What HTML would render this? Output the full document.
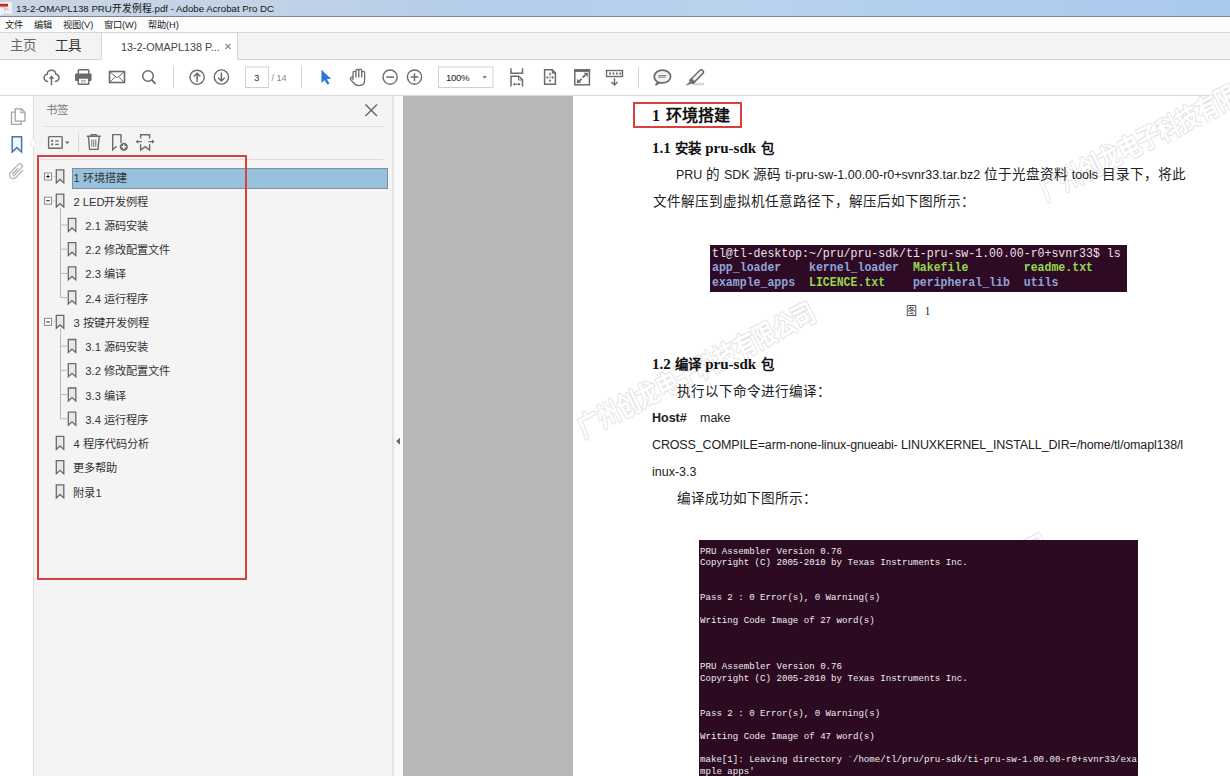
<!DOCTYPE html>
<html lang="zh-CN">
<head>
<meta charset="utf-8">
<style>
*{margin:0;padding:0;box-sizing:border-box}
html,body{width:1230px;height:776px;overflow:hidden;background:#fff}
body{position:relative;font-family:"Liberation Sans",sans-serif;color:#333}
.a{position:absolute}
.t{position:absolute;white-space:nowrap;line-height:1}
svg{position:absolute;overflow:visible}
.h2l{font-family:"Liberation Serif",serif;font-size:15px;margin-right:1px}
.s{font-family:"Liberation Sans",sans-serif;font-size:12.5px}
</style>
</head>
<body>
<!-- title bar -->
<div class="a" style="left:0;top:0;width:1230px;height:16px;background:linear-gradient(90deg,#c9d5e2 0%,#c3d3e6 20%,#b4cdea 40%,#b9d2ee 60%,#a9c9ee 100%)"></div>
<div class="a" style="left:0;top:16px;width:1230px;height:1px;background:#7a8696"></div>
<!-- menu bar -->
<div class="a" style="left:0;top:17px;width:1230px;height:15px;background:#fcfcfc"></div>
<div class="a" style="left:0;top:32px;width:1230px;height:1px;background:#d8d8d8"></div>
<!-- tab bar -->
<div class="a" style="left:0;top:33px;width:1230px;height:26px;background:#f3f3f3"></div>
<div class="a" style="left:0;top:59px;width:1230px;height:1px;background:#d6d6d6"></div>
<div class="a" style="left:101px;top:32px;width:137px;height:28px;background:#fff;border-left:1px solid #d6d6d6;border-right:1px solid #d6d6d6;border-top:1px solid #d6d6d6"></div>
<!-- toolbar -->
<div class="a" style="left:0;top:60px;width:1230px;height:35px;background:#fff"></div>
<div class="a" style="left:0;top:95px;width:1230px;height:1px;background:#d9d9d9"></div>
<!-- nav rail -->
<div class="a" style="left:0;top:96px;width:34px;height:680px;background:#fff"></div>
<div class="a" style="left:33px;top:96px;width:1px;height:680px;background:#dcdcdc"></div>
<!-- panel -->
<div class="a" style="left:34px;top:96px;width:358px;height:680px;background:#f4f4f4"></div>
<div class="a" style="left:392px;top:96px;width:2px;height:680px;background:#e2e2e2"></div>
<div class="a" style="left:394px;top:96px;width:9px;height:680px;background:#f9f9f9"></div>
<!-- doc grey -->
<div class="a" style="left:403px;top:96px;width:170px;height:680px;background:#b8b8b8"></div>
<!-- page -->
<div class="a" style="left:573px;top:96px;width:657px;height:680px;background:#fff"></div>

<!-- title text -->
<svg style="left:0;top:0" width="14" height="17">
<rect x="0" y="2" width="12" height="13" fill="#eef0f4"/>
<rect x="0" y="3.8" width="8" height="2.8" fill="#c8281e"/>
<path d="M3 7 C5 8 6 9 5 11.5 M6.5 7.5 L8.5 10.5" stroke="#e6aaaa" stroke-width="1.2" fill="none"/>
<path d="M2.5 14.3 H11" stroke="#b9c3d0" stroke-width="0.8"/>
</svg>
<div class="t" style="left:16px;top:4px;font-size:9.7px;color:#151515">13-2-OMAPL138 PRU开发例程.pdf - Adobe Acrobat Pro DC</div>
<!-- menu -->
<div class="t" style="left:5px;top:20.8px;font-size:9.2px;color:#1a1a1a">文件</div>
<div class="t" style="left:34px;top:20.8px;font-size:9.2px;color:#1a1a1a">编辑</div>
<div class="t" style="left:63px;top:20.8px;font-size:9.2px;color:#1a1a1a">视图(V)</div>
<div class="t" style="left:104px;top:20.8px;font-size:9.2px;color:#1a1a1a">窗口(W)</div>
<div class="t" style="left:148px;top:20.8px;font-size:9.2px;color:#1a1a1a">帮助(H)</div>
<!-- tabs -->
<div class="t" style="left:10px;top:39px;font-size:13.5px;color:#666">主页</div>
<div class="t" style="left:55px;top:39px;font-size:13.5px;color:#333">工具</div>
<div class="t" style="left:121px;top:41.6px;font-size:10.8px;color:#444">13-2-OMAPL138 P...</div>
<svg style="left:0;top:0" width="1230" height="96">
<path d="M225.5 44 L230.5 49 M230.5 44 L225.5 49" stroke="#8a8a8a" stroke-width="1.2"/>
</svg>
<!-- toolbar icons -->
<svg style="left:0;top:0" width="1230" height="96" fill="none" stroke="#6b6b6b" stroke-width="1.5">
<!-- cloud upload -->
<path d="M48.2 81.35 A3.6 3.6 0 1 1 47.12 74.23 A4.4 4.4 0 0 1 55.88 74.2 A3.6 3.6 0 1 1 54.8 81.35" stroke-width="1.5"/>
<path d="M51.5 85.3 V77.8" stroke-width="1.5"/><path d="M51.5 75.2 L48.7 78.7 H54.3 Z" fill="#6b6b6b" stroke="none"/>
<!-- printer -->
<rect x="78.3" y="69.8" width="10.4" height="5" rx="0.8"/>
<rect x="75" y="73.6" width="16.6" height="7.3" rx="0.8" fill="#6b6b6b" stroke="none"/>
<rect x="78.3" y="78" width="10.4" height="6.3" rx="0.6" fill="#fff"/>
<path d="M81 80.4 H86 M81 82 H86" stroke="#9a9a9a" stroke-width="0.9"/>
<!-- envelope -->
<rect x="109.5" y="71.5" width="15" height="11" stroke-width="1.6"/>
<path d="M110 72 L117 77.8 L124 72 M110 82 L115.2 77 M124 82 L118.8 77" stroke-width="1"/>
<!-- search -->
<circle cx="148" cy="76" r="5.3" stroke-width="1.5"/>
<path d="M151.8 79.8 L155.5 83.8" stroke-width="1.8"/>
<!-- separators -->
<path d="M173.5 66.5 V88 M301.5 66.5 V88 M638.5 67 V88" stroke="#d4d4d4" stroke-width="1"/>
<!-- up/down -->
<circle cx="197.1" cy="77.3" r="7.1" stroke-width="1.4"/>
<path d="M197.1 73.2 V81.8 M193.8 76.5 L197.1 73.2 L200.4 76.5" stroke-width="1.5"/>
<circle cx="221.4" cy="77" r="7.1" stroke-width="1.4"/>
<path d="M221.4 72.5 V81 M218.1 77.7 L221.4 81 L224.7 77.7" stroke-width="1.5"/>
<!-- page box -->
<rect x="245.5" y="67" width="23" height="20.5" stroke="#d0d0d0" stroke-width="1"/>
<!-- cursor -->
<path d="M321.4 69.8 L321.4 83 L324.5 80.2 L327.4 84.6 L329.6 83.4 L326.8 79.2 L331 78.8 Z" fill="#2b78d4" stroke="none"/>
<!-- hand -->
<path d="M353 80 V72.8 A1.45 1.45 0 0 1 355.9 72.8 V77 V70.9 A1.45 1.45 0 0 1 358.8 70.9 V77 V70.5 A1.45 1.45 0 0 1 361.7 70.5 V77 V72.8 A1.45 1.45 0 0 1 364.6 72.8 V80.3 C364.6 83.9 362.5 85.6 359.2 85.6 C356.3 85.6 354.8 84.6 353.2 82.6 L350.7 79.5 A1.3 1.3 0 0 1 352.7 77.8 L353.2 78.5" stroke-width="1.3" stroke-linejoin="round"/>
<!-- minus / plus -->
<circle cx="390.1" cy="77.1" r="7.1" stroke-width="1.4"/>
<path d="M386.2 77.1 H394" stroke-width="1.5"/>
<circle cx="414.5" cy="77.1" r="7.1" stroke-width="1.4"/>
<path d="M410.6 77.1 H418.4 M414.5 73.2 V81" stroke-width="1.5"/>
<!-- zoom box -->
<rect x="438.5" y="67" width="54.5" height="20.5" stroke="#d0d0d0" stroke-width="1"/>
<path d="M482.4 76.2 H487 L484.7 78.6 Z" fill="#666" stroke="none"/>
<!-- fit width -->
<path d="M511 68.2 V73.2 H522.5 V68.2" stroke-width="1.5"/>
<path d="M511 86.5 V76.2 H518.8 L522.5 79.8 V86.5" stroke-width="1.5"/>
<path d="M518.5 76.2 V80 H522.5" stroke-width="1"/>
<path d="M514 84.2 H519.5" stroke-width="1.1"/><path d="M512.8 84.2 L515 82.6 V85.8 Z M520.7 84.2 L518.5 82.6 V85.8 Z" fill="#6b6b6b" stroke="none"/>
<!-- fit page -->
<path d="M544.6 69.8 H552.2 L555.4 73 V84.3 H544.6 Z" stroke-width="1.5"/>
<path d="M552.2 69.8 V73.2 H555.4 Z" fill="#6b6b6b" stroke-width="0.8"/>
<path d="M550 74 V80.8 M547 77.4 H553" stroke="#9a9a9a" stroke-width="0.7"/><path d="M550 72.6 L548.5 74.6 H551.5 Z M550 82.2 L548.5 80.2 H551.5 Z M545.8 77.4 L547.8 75.9 V78.9 Z M554.2 77.4 L552.2 75.9 V78.9 Z" fill="#6b6b6b" stroke="none"/>
<!-- fullscreen -->
<rect x="574.8" y="69.8" width="14.6" height="15" stroke-width="1.5"/>
<rect x="574.1" y="69.1" width="16" height="2.8" fill="#6b6b6b" stroke="none"/>
<path d="M582.6 77.6 L585.4 74.8 M581.6 78.8 L579 81.4" stroke-width="1.8"/><path d="M587.8 72.8 H583.6 L587.8 77 Z M576.9 82.9 H581.1 L576.9 78.7 Z" fill="#6b6b6b" stroke="none"/>
<!-- scroll mode -->
<rect x="606.5" y="70.5" width="16" height="6" stroke-width="1.4"/>
<path d="M609.2 73.5 H611 M612.6 73.5 H614.4 M616 73.5 H617.8 M619.4 73.5 H621.2" stroke-width="2"/>
<path d="M614.5 78.3 V85 M611.4 82 L614.5 85 L617.6 82" stroke-width="1.4"/>
<!-- comment -->
<path d="M657.8 82 C655.3 80.8 654.3 78.8 654.3 76.6 C654.3 72.8 658 70.2 662.5 70.2 C667 70.2 670.6 72.8 670.6 76.6 C670.6 80.3 667 82.9 662.5 82.9 C661.5 82.9 660.6 82.8 659.7 82.6 L656 84.8 Z" fill="#f2f2f2" stroke-width="1.7" stroke-linejoin="round"/>
<path d="M658.3 75.6 H666.4 M658.3 77.2 H665.6" stroke="#8a8a8a" stroke-width="1.1"/>
<!-- pen -->
<path d="M693.5 84 H704" stroke="#d6d6d6" stroke-width="2.6"/>
<path d="M689.9 80.3 L699.7 70.5 A2.15 2.15 0 0 1 702.8 73.6 L693 83.4 Z" fill="#f4f4f4" stroke-width="1.5" stroke-linejoin="round"/>
<path d="M689.9 80.3 L691.4 78.8 L694.5 81.9 L693 83.4 Z" fill="#6b6b6b" stroke-width="1.2"/>
<path d="M690.2 81.4 L686.6 85 L691.9 83.1 Z" fill="#6b6b6b" stroke-width="0.8"/>
</svg>
<div class="t" style="left:254px;top:73px;font-size:9.6px;color:#333">3</div>
<div class="t" style="left:271.5px;top:74px;font-size:9px;color:#888">/ 14</div>
<div class="t" style="left:446px;top:72.8px;font-size:9.6px;color:#222;letter-spacing:-0.3px">100%</div>
<!-- nav rail icons -->
<svg style="left:0;top:0" width="40" height="200" fill="none" stroke="#a2a2a2" stroke-width="1.3">
<path d="M15.2 108.8 H21.3 L25 112.5 V121.2 H15.2 Z" stroke-linejoin="round"/>
<path d="M21 108.8 V112.7 H25" stroke-width="1.1"/>
<path d="M15.2 112.2 H11.5 V124.4 H21.2 V121.4" stroke-linejoin="round"/>
<path d="M12.2 136.7 H21.6 V152 L16.9 147.6 L12.2 152 Z" fill="#f3f6fa" stroke="#3f78b4" stroke-width="1.5" stroke-linejoin="miter"/>
<path d="M34 138.5 L29.5 143.3 L34 148" fill="#fff" stroke="#dcdcdc" stroke-width="1"/>
<path d="M13.5 176 L21.6 167.6 A2.3 2.3 0 0 0 18.3 164.4 L10.6 172.5 A3.6 3.6 0 0 0 15.8 177.5 L22.7 170.4 M17.6 168.8 L12.6 174" stroke="#b0b0b0" stroke-width="1.25" stroke-linecap="round"/>
</svg>
<!-- panel header -->
<div class="t" style="left:46px;top:105px;font-size:11.5px;color:#7a7a7a">书签</div>
<svg style="left:0;top:0" width="400" height="170" fill="none" stroke="#6b6b6b" stroke-width="1.4">
<path d="M365.5 104.5 L377 116 M377 104.5 L365.5 116" stroke-width="1.5"/>
<path d="M45 126.5 H383" stroke="#dcdcdc" stroke-width="1.2"/>
<path d="M40 159.5 H383" stroke="#dedede" stroke-width="1"/>
<!-- options -->
<rect x="48.6" y="136.6" width="13.6" height="11.6" rx="0.8" stroke-width="1.4"/>
<circle cx="52.2" cy="140.9" r="1.15" fill="#6b6b6b" stroke="none"/><circle cx="52.2" cy="144.4" r="1.15" fill="#6b6b6b" stroke="none"/><path d="M55.2 140.9 H58.8 M55.2 144.4 H58.8" stroke-width="1.3"/>
<path d="M65 141.6 H69.5 L67.25 144.2 Z" fill="#6b6b6b" stroke="none"/>
<path d="M78.5 132.5 V152.5" stroke="#d8d8d8" stroke-width="1"/>
<!-- trash -->
<path d="M86.8 136.2 H100.8 M91.2 136.2 V134.6 H96.4 V136.2 M88.4 136.5 L89.6 149.4 H98 L99.2 136.5" stroke-width="1.4" stroke-linejoin="round"/>
<path d="M91.8 139.5 V146.8 M93.8 139.5 V146.8 M95.8 139.5 V146.8" stroke-width="0.9"/>
<!-- bookmark add -->
<path d="M121 143 V134.6 H112.7 V149.8 L116.6 146.3" stroke-width="1.4" stroke-linejoin="miter"/>
<circle cx="123.8" cy="146.8" r="4.4" fill="#6b6b6b" stroke="#f4f4f4" stroke-width="0.8"/>
<path d="M121.6 146.8 H126 M123.8 144.6 V149" stroke="#fff" stroke-width="1.4"/>
<!-- expand bookmark -->
<path d="M140.6 138.6 V134.7 H149.6 V138.6 M140.6 144.2 V150 L145.1 146.6 L149.6 150 V144.2" stroke-width="1.4" stroke-linejoin="miter"/>
<path d="M137.5 141.7 H141.8 M148.4 141.7 H152.7" stroke-width="1.3"/><path d="M135.6 141.7 L138.2 139.6 V143.8 Z M154.6 141.7 L152 139.6 V143.8 Z" fill="#6b6b6b" stroke="none"/>
</svg>
<!-- selection -->
<div class="a" style="left:72px;top:168px;width:316px;height:21px;background:#98c1dd;border:1px solid #7b919f"></div>
<!-- red box -->
<div class="a" style="left:37px;top:155px;width:210px;height:425px;border:2px solid #d6403d"></div>
<svg style="left:0;top:0" width="400" height="776" fill="none">
<path d="M56.3 169.9 H63.8 V182.9 L60.0 179.5 L56.3 182.9 Z" fill="#e8e8e8" stroke="#6a6a6a" stroke-width="1.3" stroke-linejoin="miter"/>
<rect x="44.5" y="173.0" width="7" height="7" fill="#fff" stroke="#8a8a8a" stroke-width="1"/>
<path d="M46.2 176.5 H49.8" stroke="#222" stroke-width="1"/>
<path d="M48 174.7 V178.3" stroke="#222" stroke-width="1"/>
<path d="M51.5 176.5 H55" stroke="#bbb" stroke-width="1" stroke-dasharray="1 1"/>
<path d="M56.3 194.1 H63.8 V207.1 L60.0 203.7 L56.3 207.1 Z" fill="#e8e8e8" stroke="#6a6a6a" stroke-width="1.3" stroke-linejoin="miter"/>
<rect x="44.5" y="197.2" width="7" height="7" fill="#fff" stroke="#8a8a8a" stroke-width="1"/>
<path d="M46.2 200.7 H49.8" stroke="#222" stroke-width="1"/>
<path d="M51.5 200.7 H55" stroke="#bbb" stroke-width="1" stroke-dasharray="1 1"/>
<path d="M68.3 218.4 H75.8 V231.4 L72.0 228.0 L68.3 231.4 Z" fill="#e8e8e8" stroke="#6a6a6a" stroke-width="1.3" stroke-linejoin="miter"/>
<path d="M60.5 225.0 H67" stroke="#b8b8b8" stroke-width="1"/>
<path d="M68.3 242.6 H75.8 V255.6 L72.0 252.2 L68.3 255.6 Z" fill="#e8e8e8" stroke="#6a6a6a" stroke-width="1.3" stroke-linejoin="miter"/>
<path d="M60.5 249.2 H67" stroke="#b8b8b8" stroke-width="1"/>
<path d="M68.3 266.8 H75.8 V279.8 L72.0 276.4 L68.3 279.8 Z" fill="#e8e8e8" stroke="#6a6a6a" stroke-width="1.3" stroke-linejoin="miter"/>
<path d="M60.5 273.4 H67" stroke="#b8b8b8" stroke-width="1"/>
<path d="M68.3 291.0 H75.8 V304.0 L72.0 300.6 L68.3 304.0 Z" fill="#e8e8e8" stroke="#6a6a6a" stroke-width="1.3" stroke-linejoin="miter"/>
<path d="M60.5 297.6 H67" stroke="#b8b8b8" stroke-width="1"/>
<path d="M56.3 315.3 H63.8 V328.3 L60.0 324.9 L56.3 328.3 Z" fill="#e8e8e8" stroke="#6a6a6a" stroke-width="1.3" stroke-linejoin="miter"/>
<rect x="44.5" y="318.4" width="7" height="7" fill="#fff" stroke="#8a8a8a" stroke-width="1"/>
<path d="M46.2 321.9 H49.8" stroke="#222" stroke-width="1"/>
<path d="M51.5 321.9 H55" stroke="#bbb" stroke-width="1" stroke-dasharray="1 1"/>
<path d="M68.3 339.5 H75.8 V352.5 L72.0 349.1 L68.3 352.5 Z" fill="#e8e8e8" stroke="#6a6a6a" stroke-width="1.3" stroke-linejoin="miter"/>
<path d="M60.5 346.1 H67" stroke="#b8b8b8" stroke-width="1"/>
<path d="M68.3 363.7 H75.8 V376.7 L72.0 373.3 L68.3 376.7 Z" fill="#e8e8e8" stroke="#6a6a6a" stroke-width="1.3" stroke-linejoin="miter"/>
<path d="M60.5 370.3 H67" stroke="#b8b8b8" stroke-width="1"/>
<path d="M68.3 388.0 H75.8 V401.0 L72.0 397.6 L68.3 401.0 Z" fill="#e8e8e8" stroke="#6a6a6a" stroke-width="1.3" stroke-linejoin="miter"/>
<path d="M60.5 394.6 H67" stroke="#b8b8b8" stroke-width="1"/>
<path d="M68.3 412.2 H75.8 V425.2 L72.0 421.8 L68.3 425.2 Z" fill="#e8e8e8" stroke="#6a6a6a" stroke-width="1.3" stroke-linejoin="miter"/>
<path d="M60.5 418.8 H67" stroke="#b8b8b8" stroke-width="1"/>
<path d="M56.3 436.4 H63.8 V449.4 L60.0 446.0 L56.3 449.4 Z" fill="#e8e8e8" stroke="#6a6a6a" stroke-width="1.3" stroke-linejoin="miter"/>
<path d="M56.3 460.7 H63.8 V473.7 L60.0 470.3 L56.3 473.7 Z" fill="#e8e8e8" stroke="#6a6a6a" stroke-width="1.3" stroke-linejoin="miter"/>
<path d="M56.3 484.9 H63.8 V497.9 L60.0 494.5 L56.3 497.9 Z" fill="#e8e8e8" stroke="#6a6a6a" stroke-width="1.3" stroke-linejoin="miter"/>
<path d="M60.5 207.7 V297.6 M60.5 328.9 V418.8" stroke="#b8b8b8" stroke-width="1"/>
</svg>
<div class="t" style="left:73.4px;top:172.5px;font-size:11.2px;color:#333">1 环境搭建</div>
<div class="t" style="left:73.4px;top:196.7px;font-size:11.2px;color:#333">2 LED开发例程</div>
<div class="t" style="left:85.3px;top:221.0px;font-size:11.2px;color:#333">2.1 源码安装</div>
<div class="t" style="left:85.3px;top:245.2px;font-size:11.2px;color:#333">2.2 修改配置文件</div>
<div class="t" style="left:85.3px;top:269.4px;font-size:11.2px;color:#333">2.3 编译</div>
<div class="t" style="left:85.3px;top:293.6px;font-size:11.2px;color:#333">2.4 运行程序</div>
<div class="t" style="left:73.4px;top:317.9px;font-size:11.2px;color:#333">3 按键开发例程</div>
<div class="t" style="left:85.3px;top:342.1px;font-size:11.2px;color:#333">3.1 源码安装</div>
<div class="t" style="left:85.3px;top:366.3px;font-size:11.2px;color:#333">3.2 修改配置文件</div>
<div class="t" style="left:85.3px;top:390.6px;font-size:11.2px;color:#333">3.3 编译</div>
<div class="t" style="left:85.3px;top:414.8px;font-size:11.2px;color:#333">3.4 运行程序</div>
<div class="t" style="left:73.4px;top:439.0px;font-size:11.2px;color:#333">4 程序代码分析</div>
<div class="t" style="left:73.4px;top:463.3px;font-size:11.2px;color:#333">更多帮助</div>
<div class="t" style="left:73.4px;top:487.5px;font-size:11.2px;color:#333">附录1</div>
<!-- splitter arrow -->
<svg style="left:0;top:0" width="410" height="776"><path d="M400 437.8 V444.8 L396 441.3 Z" fill="#6a6a6a"/></svg>
<!-- watermark -->
<svg style="left:0;top:0" width="1230" height="776">
<g font-family="Liberation Sans, sans-serif" font-size="27" font-weight="bold" fill="#fff" stroke="#e3e3e3" stroke-width="2.2" paint-order="stroke" stroke-linejoin="round">
<text x="584" y="438" transform="rotate(-27 584 438)" textLength="262" lengthAdjust="spacingAndGlyphs">广州创龙电子科技有限公司</text>
<text x="1046" y="201" transform="rotate(-27 1046 201)" textLength="262" lengthAdjust="spacingAndGlyphs">广州创龙电子科技有限公司</text>
<text x="817" y="670" transform="rotate(-27 817 670)" textLength="262" lengthAdjust="spacingAndGlyphs">广州创龙电子科技有限公司</text>
</g>
</svg>
<!-- document -->
<div class="a" style="left:633px;top:101.5px;width:109px;height:26px;border:2px solid #d6403d"></div>
<div class="t" style="left:652px;top:108.2px;font-size:16px;font-weight:bold;color:#111"><span style="font-family:'Liberation Serif',serif;margin-right:1.2px">1</span> 环境搭建</div>
<div class="t" style="left:652px;top:140.5px;font-size:13.4px;font-weight:bold;color:#111"><span class="h2l">1.1</span> 安装 <span class="h2l">pru-sdk</span> 包</div>
<div class="t" style="left:676px;top:168.3px;font-size:13.6px;color:#222"><span class="s">PRU</span> 的 <span class="s">SDK</span> 源码 <span class="s">ti-pru-sw-1.00.00-r0+svnr33.tar.bz2</span> 位于光盘资料 <span class="s">tools</span> 目录下，将此</div>
<div class="t" style="left:652.5px;top:195.3px;font-size:13.6px;color:#222">文件解压到虚拟机任意路径下，解压后如下图所示：</div>
<div class="a term1" style="left:710px;top:244.5px;width:417px;height:47.5px;background:#2f0a24"></div>
<div class="t" style="left:711.5px;top:246.9px;font-size:12.8px;line-height:14.6px;font-family:'Liberation Mono',monospace;color:#ebe3e8;white-space:pre;transform:scaleX(0.902);transform-origin:0 0">tl@tl-desktop:~/pru/pru-sdk/ti-pru-sw-1.00.00-r0+svnr33$ ls
<b style="color:#8ea5d8">app_loader</b>    <b style="color:#8ea5d8">kernel_loader</b>  <b style="color:#93d94a">Makefile</b>        <b style="color:#93d94a">readme.txt</b>
<b style="color:#8ea5d8">example_apps</b>  <b style="color:#93d94a">LICENCE.txt</b>    <b style="color:#8ea5d8">peripheral_lib</b>  <b style="color:#8ea5d8">utils</b></div>
<div class="t" style="left:906px;top:305.5px;font-size:11px;color:#333">图</div><div class="t" style="left:924.5px;top:305px;font-size:12px;color:#333;font-family:'Liberation Serif',serif">1</div>
<div class="t" style="left:652px;top:356.5px;font-size:13.4px;font-weight:bold;color:#111"><span class="h2l">1.2</span> 编译 <span class="h2l">pru-sdk</span> 包</div>
<div class="t" style="left:676.5px;top:384.7px;font-size:13.6px;color:#222">执行以下命令进行编译：</div>
<div class="t" style="left:652px;top:411.5px;font-size:12.5px;color:#222"><b>Host#</b></div>
<div class="t" style="left:700px;top:411.5px;font-size:12.5px;color:#222">make</div>
<div class="t" style="left:652px;top:438.5px;font-size:12.5px;color:#222;letter-spacing:-0.15px">CROSS_COMPILE=arm-none-linux-gnueabi- LINUXKERNEL_INSTALL_DIR=/home/tl/omapl138/l</div>
<div class="t" style="left:652px;top:465.5px;font-size:12.5px;color:#222">inux-3.3</div>
<div class="t" style="left:676.5px;top:492px;font-size:13.6px;color:#222">编译成功如下图所示：</div>
<div class="a" style="left:698.5px;top:540px;width:439.5px;height:236px;background:#2c0a22"></div>
<div class="t" style="left:699.8px;top:545.5px;font-size:9.8px;line-height:11.6px;font-family:'Liberation Mono',monospace;color:#f0eef0;white-space:pre;transform:scaleX(0.929);transform-origin:0 0">PRU Assembler Version 0.76
Copyright (C) 2005-2010 by Texas Instruments Inc.


Pass 2 : 0 Error(s), 0 Warning(s)

Writing Code Image of 27 word(s)



PRU Assembler Version 0.76
Copyright (C) 2005-2010 by Texas Instruments Inc.


Pass 2 : 0 Error(s), 0 Warning(s)

Writing Code Image of 47 word(s)

make[1]: Leaving directory `/home/tl/pru/pru-sdk/ti-pru-sw-1.00.00-r0+svnr33/exa
mple apps'</div>
</body>
</html>
